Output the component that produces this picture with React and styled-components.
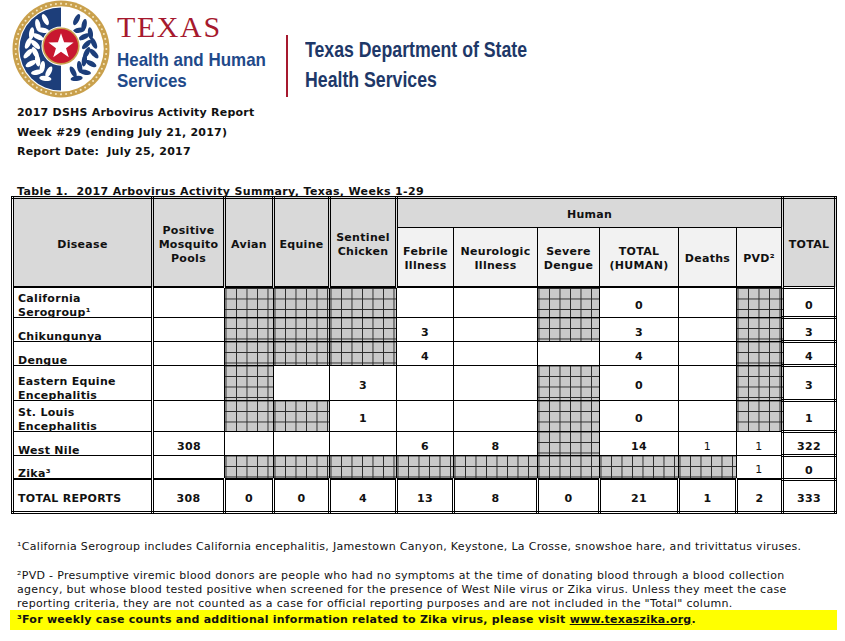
import styled, { createGlobalStyle } from "styled-components";

const GlobalStyle = createGlobalStyle`
  html, body {
    margin: 0;
    padding: 0;
    background: #fff;
  }
  body {
    font-family: "DejaVu Sans", Verdana, sans-serif;
    color: #111;
  }
`;

const X = "hatch";
const light = (v) => ({ v, light: true });

const rows = [
  { name: ["California", "Serogroup¹"], h: 30, cells: ["", X, X, X, "", "", X, "0", "", X], total: "0" },
  { name: ["Chikungunya"], h: 24, cells: ["", X, X, X, "3", "", X, "3", "", X], total: "3" },
  { name: ["Dengue"], h: 24, cells: ["", X, X, X, "4", "", "", "4", "", X], total: "4" },
  { name: ["Eastern Equine", "Encephalitis"], h: 35, cells: ["", X, "", "3", "", "", X, "0", "", X], total: "3" },
  { name: ["St. Louis", "Encephalitis"], h: 31, cells: ["", X, X, "1", "", "", X, "0", "", X], total: "1" },
  { name: ["West Nile"], h: 24, cells: ["308", "", "", "", "6", "8", X, "14", light("1"), light("1")], total: "322" },
  { name: ["Zika³"], h: 23, cells: ["", X, X, X, X, X, X, X, X, light("1")], total: "0" },
];

const totals = ["308", "0", "0", "4", "13", "8", "0", "21", "1", "2", "333"];

const colWidths = [140, 72, 49, 56, 67, 57, 84, 62, 79, 58, 46, 53];

const Page = styled.div`
  width: 845px;
  height: 641px;
  overflow: hidden;
  box-sizing: border-box;
  padding: 0 0 0 11px;
`;

const Banner = styled.header`
  display: flex;
  align-items: flex-start;
  height: 98px;
`;

const SealBox = styled.div`
  width: 98px;
  height: 98px;
  margin-left: 1px;
  flex: none;
`;

const HhsMark = styled.div`
  display: flex;
  flex-direction: column;
  margin: 11px 0 0 7px;
  width: 169px;
  flex: none;
`;

const TexasWord = styled.div`
  font-family: "Liberation Serif", "Times New Roman", serif;
  font-size: 30px;
  line-height: 32px;
  color: #a6192e;
  letter-spacing: 1.6px;
`;

/* the logo face is a condensed sans; squeeze a regular one to its width */
const Condensed = styled.div`
  font-family: "Liberation Sans", Arial, sans-serif;
  font-weight: 700;
  white-space: nowrap;
  transform: scaleX(${(p) => p.$squeeze || 0.917});
  transform-origin: left top;
`;

const HhsLine = styled(Condensed)`
  font-size: 18.5px;
  line-height: 20.7px;
  color: #1f4a8a;
  margin-top: ${(p) => (p.$first ? "7px" : "0")};
`;

const Divider = styled.div`
  width: 2px;
  height: 62px;
  margin-top: 35px;
  flex: none;
  background: #a6192e;
`;

const DshsName = styled(Condensed)`
  margin: 35px 0 0 17px;
  font-size: 22px;
  line-height: 30px;
  color: #1e3868;
`;

const ReportInfo = styled.div`
  padding: 5px 0 0 6px;
  font-size: 11px;
  font-weight: 700;
  line-height: 19.5px;
  letter-spacing: 0.22px;
`;

const Caption = styled.div`
  padding: 23px 0 0 6px;
  margin-bottom: -3px;
  font-size: 11px;
  font-weight: 700;
  line-height: 14px;
  letter-spacing: 0.35px;
`;

const SummaryTable = styled.table`
  border-collapse: collapse;
  table-layout: fixed;
  width: 825px;
  font-size: 11px;
  font-weight: 700;
  line-height: 14px;
  letter-spacing: 0.3px;
`;

const HeadCell = styled.th`
  background: ${(p) => (p.$sub ? "#f2f2f2" : "#d9d9d9")};
  border: ${(p) => (p.$sub ? "1px solid #000" : "3px double #000")};
  border-bottom: ${(p) => (p.$top ? "1px solid #000" : "2px solid #000")};
  padding: ${(p) => (p.$top ? "4px" : "5px")} 2px 0;
  text-align: center;
  vertical-align: middle;
  font-weight: 700;
`;

const HeadRow = styled.tr`
  height: ${(p) => p.$h}px;
`;

const BodyRow = styled.tr`
  height: ${(p) => p.$h}px;
`;

const DiseaseCell = styled.td`
  border: 1px solid #000;
  border-left: 3px double #000;
  border-right: 3px double #000;
  padding: 0 0 0 4px;
  vertical-align: bottom;
  text-align: left;
`;

/* names sit low in their rows, almost on the rule below */
const DiseaseName = styled.div`
  margin-bottom: -3px;
`;

const DataCell = styled.td`
  border: 1px solid #000;
  padding: 7px 2px 0;
  text-align: center;
  vertical-align: middle;
  font-weight: ${(p) => (p.$light ? 400 : 700)};
  background-color: ${(p) => (p.$hatch ? "#c9c9c9" : "#fff")};
  background-image: ${(p) =>
    p.$hatch
      ? "linear-gradient(to right, #2a2a2a 1px, transparent 1px), linear-gradient(to bottom, #2a2a2a 1px, transparent 1px)"
      : "none"};
  background-size: 10.5px 10.5px;
`;

const TotalCell = styled.td`
  border: 3px double #000;
  text-align: center;
  vertical-align: middle;
  padding: 7px 2px 0;
`;

const SumRow = styled.tr`
  height: 33px;
`;

const SumCell = styled.td`
  border-top: 2px solid #000;
  border-bottom: 3px double #000;
  border-left: 3px double #000;
  border-right: 3px double #000;
  text-align: ${(p) => (p.$left ? "left" : "center")};
  padding: ${(p) => (p.$left ? "7px 0 0 4px" : "7px 2px 0")};
  vertical-align: middle;
`;

const Footnotes = styled.div`
  padding: 26px 0 0 6px;
  font-size: 11px;
  line-height: 14px;
  letter-spacing: 0.31px;
  white-space: nowrap;
`;

const Note = styled.p`
  margin: 0 0 ${(p) => (p.$last ? 0 : 15)}px 0;
`;

const Notice = styled.div`
  margin: -1px 0 0 -1px;
  width: 827px;
  box-sizing: border-box;
  background: #ffff00;
  padding: 3px 0 3px 7px;
  font-size: 11px;
  font-weight: 700;
  line-height: 14px;
  letter-spacing: 0.24px;
`;

const NoticeLink = styled.a`
  color: #111;
  text-decoration: underline;
`;

function Star({ cx, cy, r }) {
  const pts = [];
  for (let i = 0; i < 10; i++) {
    const rad = i % 2 === 0 ? r : r * 0.4;
    const a = (Math.PI / 5) * i - Math.PI / 2;
    pts.push(`${(cx + rad * Math.cos(a)).toFixed(2)},${(cy + rad * Math.sin(a)).toFixed(2)}`);
  }
  return <polygon points={pts.join(" ")} fill="#fff" />;
}

function Leaves({ side, color }) {
  // laurel branch along an arc on one side of the seal
  const leaves = [];
  const phis = [28, 46, 64, 82, 100, 118, 136, 152];
  phis.forEach((phi, i) => {
    const rad = (phi * Math.PI) / 180;
    [
      { r: 34, tilt: 35 },
      { r: 26.5, tilt: -35 },
    ].forEach((l, j) => {
      if (phi > 145 && j === 1) return;
      const x = 50 + side * l.r * Math.sin(rad);
      const y = 50 + l.r * Math.cos(rad);
      const tangent = side * (90 - phi) + l.tilt * side;
      leaves.push(
        <ellipse
          key={`${i}-${j}`}
          cx={x.toFixed(2)}
          cy={y.toFixed(2)}
          rx="6.2"
          ry="2.6"
          transform={`rotate(${(-tangent + 90 * side).toFixed(1)} ${x.toFixed(2)} ${y.toFixed(2)})`}
          fill={color}
        />
      );
    });
  });
  return <g>{leaves}</g>;
}

function Seal() {
  const beads = [];
  for (let i = 0; i < 56; i++) {
    const a = (i / 56) * Math.PI * 2;
    beads.push(
      <circle key={i} cx={50 + 46.3 * Math.cos(a)} cy={50 + 46.3 * Math.sin(a)} r="1.05" fill="#f5e6bd" />
    );
  }
  return (
    <svg width="98" height="98" viewBox="0 0 100 100">
      <circle cx="50" cy="50" r="49.5" fill="#c9a04c" />
      {beads}
      <circle cx="50" cy="50" r="43.6" fill="#fff" />
      <path d="M50 7.6 A42.4 42.4 0 0 0 50 92.4 Z" fill="#1d3e7a" />
      <Leaves side={-1} color="#fff" />
      <Leaves side={1} color="#1d3e7a" />
      <circle cx="50" cy="47" r="20" fill="#fff" />
      <circle cx="50" cy="47" r="19" fill="#c9a04c" />
      <circle cx="50" cy="47" r="17.4" fill="#c8172f" />
      <Star cx={50} cy={47.5} r={13.5} />
    </svg>
  );
}

function renderCell(c, i) {
  if (c === X) return <DataCell key={i} $hatch />;
  if (typeof c === "object") return <DataCell key={i} $light>{c.v}</DataCell>;
  return <DataCell key={i}>{c}</DataCell>;
}

export default function App() {
  return (
    <>
      <GlobalStyle />
      <Page>
        <Banner>
          <SealBox>
            <Seal />
          </SealBox>
          <HhsMark>
            <TexasWord>TEXAS</TexasWord>
            <HhsLine $first>Health and Human</HhsLine>
            <HhsLine>Services</HhsLine>
          </HhsMark>
          <Divider />
          <DshsName $squeeze={0.805}>
            Texas Department of State
            <br />
            Health Services
          </DshsName>
        </Banner>

        <ReportInfo>
          <div>2017 DSHS Arbovirus Activity Report</div>
          <div>Week #29 (ending July 21, 2017)</div>
          <div>Report Date:&nbsp; July 25, 2017</div>
        </ReportInfo>

        <Caption>Table 1.&nbsp; 2017 Arbovirus Activity Summary, Texas, Weeks 1-29</Caption>

        <SummaryTable>
          <colgroup>
            {colWidths.map((w, i) => (
              <col key={i} style={{ width: w }} />
            ))}
          </colgroup>
          <thead>
            <HeadRow $h={30}>
              <HeadCell rowSpan={2}>Disease</HeadCell>
              <HeadCell rowSpan={2}>Positive Mosquito Pools</HeadCell>
              <HeadCell rowSpan={2}>Avian</HeadCell>
              <HeadCell rowSpan={2}>Equine</HeadCell>
              <HeadCell rowSpan={2}>Sentinel Chicken</HeadCell>
              <HeadCell colSpan={6} $top>
                Human
              </HeadCell>
              <HeadCell rowSpan={2}>TOTAL</HeadCell>
            </HeadRow>
            <HeadRow $h={60}>
              <HeadCell $sub>Febrile Illness</HeadCell>
              <HeadCell $sub>Neurologic Illness</HeadCell>
              <HeadCell $sub>Severe Dengue</HeadCell>
              <HeadCell $sub>
                TOTAL
                <br />
                (HUMAN)
              </HeadCell>
              <HeadCell $sub>Deaths</HeadCell>
              <HeadCell $sub>PVD²</HeadCell>
            </HeadRow>
          </thead>
          <tbody>
            {rows.map((r) => (
              <BodyRow key={r.name[0]} $h={r.h}>
                <DiseaseCell>
                  <DiseaseName>
                    {r.name.map((n) => (
                      <div key={n}>{n}</div>
                    ))}
                  </DiseaseName>
                </DiseaseCell>
                {r.cells.map(renderCell)}
                <TotalCell>{r.total}</TotalCell>
              </BodyRow>
            ))}
            <SumRow>
              <SumCell $left>TOTAL REPORTS</SumCell>
              {totals.map((t, i) => (
                <SumCell key={i}>{t}</SumCell>
              ))}
            </SumRow>
          </tbody>
        </SummaryTable>

        <Footnotes>
          <Note>
            ¹California Serogroup includes California encephalitis, Jamestown Canyon, Keystone, La Crosse,
            snowshoe hare, and trivittatus viruses.
          </Note>
          <Note $last>
            ²PVD - Presumptive viremic blood donors are people who had no symptoms at the time of donating blood
            through a blood collection
            <br />
            agency, but whose blood tested positive when screened for the presence of West Nile virus or Zika
            virus. Unless they meet the case
            <br />
            reporting criteria, they are not counted as a case for official reporting purposes and are not included
            in the "Total" column.
          </Note>
        </Footnotes>
        <Notice>
          ³For weekly case counts and additional information related to Zika virus, please visit{" "}
          <NoticeLink href="#">www.texaszika.org</NoticeLink>.
        </Notice>
      </Page>
    </>
  );
}
